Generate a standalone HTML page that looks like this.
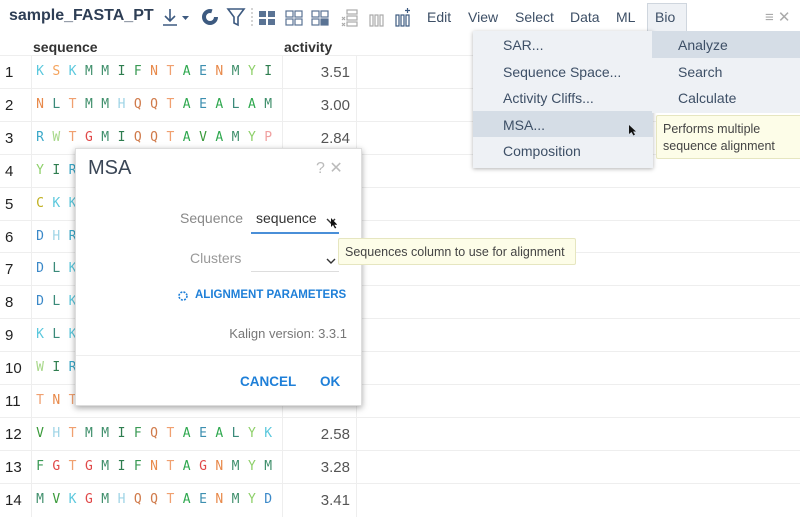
<!DOCTYPE html>
<html><head><meta charset="utf-8"><style>
*{box-sizing:border-box;margin:0;padding:0}
body{width:800px;height:500px;overflow:hidden;background:#fff;font-family:"Liberation Sans",sans-serif;position:relative;color:#333}
.title{position:absolute;left:9px;top:7px;font-size:16px;font-weight:bold;color:#2e3e55}
.menu{position:absolute;top:9px;font-size:14px;color:#3d4f66}
.hdr{position:absolute;top:39px;font-size:14px;font-weight:bold;color:#333}
.row{position:absolute;left:0;width:800px;height:33px;border-top:1px solid #eee}
.num{position:absolute;left:5px;top:8px;font-size:15px;color:#222}
.seq{position:absolute;left:31px;top:0;width:252px;height:33px;border-left:1px solid #eee;border-right:1px solid #eee}
.seq span{position:absolute;top:8px;font-family:"DejaVu Sans Mono","Liberation Mono",monospace;font-size:13px;width:10px;text-align:center}
.act{position:absolute;left:283px;width:74px;height:33px;border-right:1px solid #eee;text-align:right;padding-right:6px;padding-top:8px;font-size:15px;color:#555}
.dd{position:absolute;left:473px;top:31px;width:180px;height:137px;background:#eef1f5;box-shadow:0 1px 4px rgba(0,0,0,.3);font-size:14px;color:#3d4f66}
.dd div{height:26.5px;padding:6px 0 0 30px}
.sub{position:absolute;left:652px;top:31px;width:148px;height:82px;background:#eef1f5;font-size:14px;color:#3d4f66}
.sub div{height:26.5px;padding:6px 0 0 26px}
.tip{position:absolute;background:#fdfde8;border:1px solid #e6e6c0;font-size:12.5px;color:#444;border-radius:2px}
.dlg{position:absolute;left:75px;top:148px;width:287px;height:258px;background:#fff;box-shadow:0 2px 6px rgba(0,0,0,.35);border:1px solid #ddd}
</style></head><body>
<div class="title">sample_FASTA_PT</div>
<svg style="position:absolute;left:150px;top:4px" width="270" height="26">
<g stroke="#3d5a80" fill="none" stroke-width="1.6">
<path d="M20 5v12M15 12l5 5 5-5M13 21h14"/>
<path d="M32 12h7l-3.5 4z" fill="#3d5a80" stroke="none"/>
<circle cx="60" cy="13" r="6" stroke-width="4" stroke-dasharray="30 8"/>
<path d="M78 5h16l-6 8v8l-4-2v-6z"/>
</g>
<g stroke="#aaa" stroke-dasharray="2 2"><path d="M102 4v20M336 4v20"/></g>
<g fill="#5a7394"><rect x="109" y="7" width="7" height="6"/><rect x="118" y="7" width="7" height="6"/><rect x="109" y="15" width="7" height="6"/><rect x="118" y="15" width="7" height="6"/></g>
<g fill="none" stroke="#5a7394" stroke-width="1.2"><rect x="136" y="7" width="7" height="6"/><rect x="145" y="7" width="7" height="6"/><rect x="136" y="15" width="7" height="6"/><rect x="145" y="15" width="7" height="6"/>
<rect x="162" y="7" width="7" height="6"/><rect x="171" y="7" width="7" height="6"/><rect x="162" y="15" width="7" height="6"/><rect x="171" y="15" width="7" height="6"/></g>
<g fill="#5a7394"><rect x="171" y="15" width="7" height="6"/></g>
<g fill="none" stroke="#aaa" stroke-width="1.2"><rect x="197" y="6" width="10" height="4"/><rect x="197" y="12" width="10" height="4"/><rect x="197" y="18" width="10" height="4"/><path d="M192 13l3 3M195 13l-3 3M192 19l3 3M195 19l-3 3"/>
<rect x="220" y="11" width="3" height="11"/><rect x="225" y="11" width="3" height="11"/><rect x="230" y="11" width="3" height="11"/></g>
<g fill="none" stroke="#3d5a80" stroke-width="1.2"><rect x="246" y="11" width="3" height="11"/><rect x="251" y="11" width="3" height="11"/><rect x="256" y="11" width="3" height="11"/><path d="M257.5 4v5M255 6.5h5"/></g>
</svg>
<div class="menu" style="left:427px">Edit</div><div class="menu" style="left:468px">View</div><div class="menu" style="left:515px">Select</div><div class="menu" style="left:570px">Data</div><div class="menu" style="left:616px">ML</div>
<div style="position:absolute;left:647px;top:3px;width:40px;height:30px;background:#eef1f5;border:1px solid #cfd6de;border-bottom:none"></div>
<div class="menu" style="left:655px">Bio</div>
<div style="position:absolute;left:765px;top:8px;color:#aaa;font-size:15px">≡ ✕</div>
<div class="hdr" style="left:33px">sequence</div><div class="hdr" style="left:284px">activity</div>
<div id="grid"></div>
<div class="dd"><div>SAR...</div><div>Sequence Space...</div><div>Activity Cliffs...</div><div style="background:#d5dde6">MSA...</div><div>Composition</div></div>
<div class="sub"><div style="background:#d5dde6">Analyze</div><div>Search</div><div>Calculate</div></div>
<svg style="position:absolute;left:628px;top:124px" width="9" height="12"><path d="M1 1v9l2.5-2 2 3.5 1.5-1-2-3h3z" fill="#111"/></svg>
<div class="tip" style="left:656px;top:115px;width:150px;height:44px;padding:5px 6px;line-height:17px">Performs multiple sequence alignment</div>
<div class="dlg">
<div style="position:absolute;left:12px;top:8px;font-size:20px;color:#3a4656">MSA</div>
<div style="position:absolute;left:240px;top:9px;font-size:16px;color:#bbb">? ✕</div>
<div style="position:absolute;left:104px;top:61px;font-size:14px;color:#888">Sequence</div>
<div style="position:absolute;left:180px;top:61px;font-size:14px;color:#333">sequence</div>
<div style="position:absolute;left:175px;top:83px;width:88px;height:2px;background:#4a8fd8"></div>
<div style="position:absolute;left:114px;top:101px;font-size:14px;color:#999">Clusters</div>
<div style="position:absolute;left:175px;top:122px;width:88px;height:1px;background:#ddd"></div>
<svg style="position:absolute;left:249px;top:66px" width="12" height="60"><path d="M2 4l4 4 4-4M2 44l4 4 4-4" stroke="#333" fill="none" stroke-width="1.4"/><path d="M6 3v9l2-2 2 3.5 1.3-.8-2-3h3z" fill="#111"/></svg>
<svg style="position:absolute;left:101px;top:141px" width="12" height="12"><circle cx="6" cy="6" r="4" fill="none" stroke="#1e7fd8" stroke-width="1.6" stroke-dasharray="2 1.2"/></svg>
<div style="position:absolute;left:119px;top:140px;font-size:11.5px;font-weight:bold;color:#1e7fd8">ALIGNMENT PARAMETERS</div>
<div style="position:absolute;right:14px;top:177px;font-size:13px;color:#777">Kalign version: 3.3.1</div>
<div style="position:absolute;left:0;top:206px;width:100%;height:1px;background:#eee"></div>
<div style="position:absolute;left:164px;top:225px;font-size:13.5px;font-weight:bold;color:#1e7fd8">CANCEL</div>
<div style="position:absolute;left:244px;top:225px;font-size:13.5px;font-weight:bold;color:#1e7fd8">OK</div>
</div>
<div class="tip" style="left:338px;top:238px;width:238px;height:27px;padding:6px 6px">Sequences column to use for alignment</div>
<script>
var C={K:"#5bc8dd",S:"#f5a35c",M:"#3f8f6b",I:"#2e7d4f",F:"#3a9a55",N:"#e8894a",T:"#f0a070",A:"#2fa84f",E:"#3d8fb0",Y:"#8ed06a",H:"#9fd4e6",Q:"#d07a4a",L:"#3a8a7a",G:"#e04848",R:"#3aa8c8",V:"#3a9a3a",P:"#f0a0a0",W:"#a8d88a",C:"#c0b020",D:"#3a88c8"};
var rows=[["KSKMMIFNTAENMYI","3.51"],["NLTMMHQQTAEALAM","3.00"],["RWTGMIQQTAVAMYP","2.84"],["YIR",""],["CKK",""],["DHR",""],["DLK",""],["DLK",""],["KLK",""],["WIR",""],["TNT",""],["VHTMMIFQTAEALYK","2.58"],["FGTGMIFNTAGNMYM","3.28"],["MVKGMHQQTAENMYD","3.41"]];
var h="";rows.forEach(function(r,i){var s="";for(var j=0;j<r[0].length;j++){s+='<span style="left:'+(3+j*16.3)+'px;color:'+C[r[0][j]]+'">'+r[0][j]+'</span>';}
h+='<div class="row" style="top:'+(55+i*32.9)+'px"><div class="num">'+(i+1)+'</div><div class="seq">'+s+'</div><div class="act">'+r[1]+'</div></div>';});
document.getElementById("grid").innerHTML=h;
</script>
</body></html>
